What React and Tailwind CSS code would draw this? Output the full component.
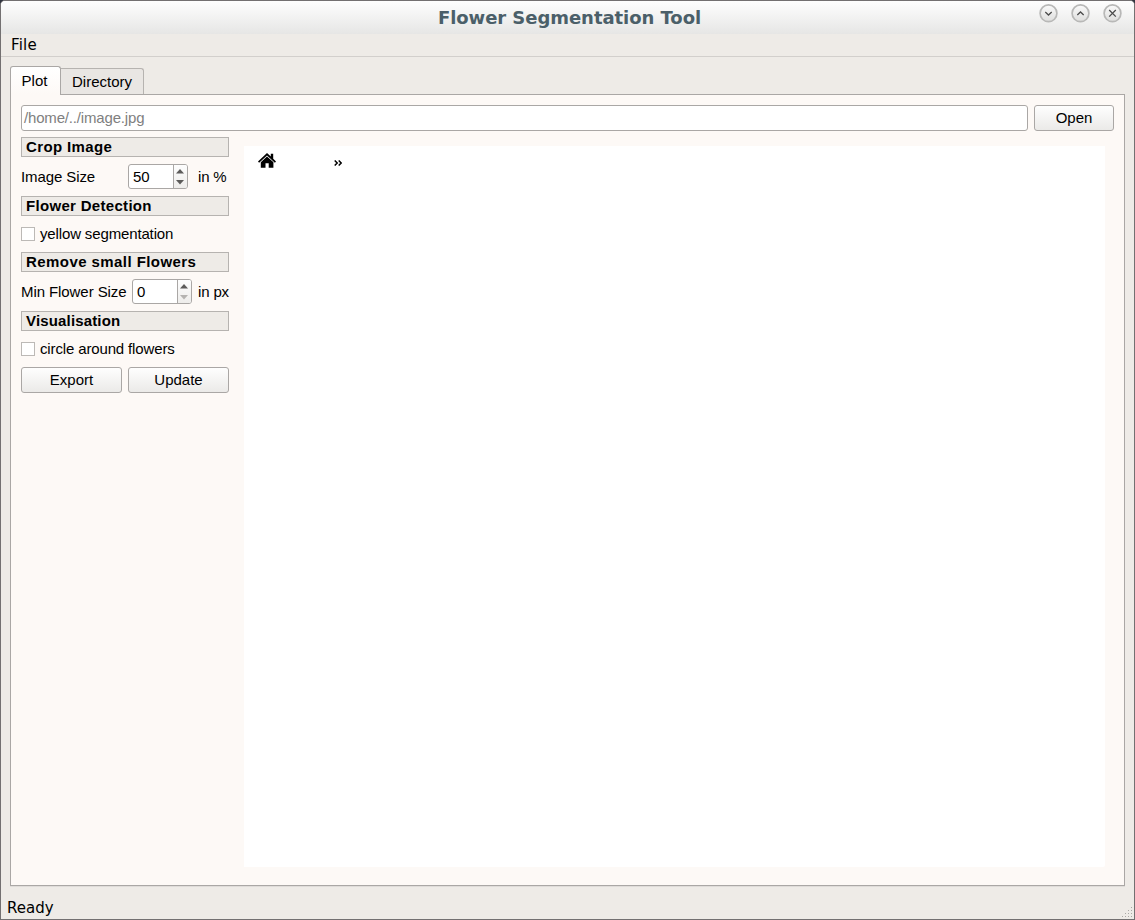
import React from "react";

const SANS = "font-['Liberation_Sans',sans-serif]";

function TitleButton({ path }) {
  return (
    <svg className="h-5 w-5" viewBox="0 0 20 20" fill="none">
      <defs>
        <linearGradient id="knob" x1="0" y1="0" x2="0" y2="1">
          <stop offset="0" stopColor="#fafafa" />
          <stop offset="1" stopColor="#dededd" />
        </linearGradient>
      </defs>
      <circle cx="10.5" cy="10.3" r="8.4" fill="url(#knob)" stroke="#b8b8b7" strokeWidth="1.7" />
      <path d={path} stroke="#4c4c4c" strokeWidth="1.3" />
    </svg>
  );
}

function SectionTitle({ children, spacing = "tracking-[0.38px]" }) {
  return (
    <div className={`${spacing} h-5 w-[208px] shrink-0 border border-[#b6b3b0] bg-[#eeebe7] pl-1 text-[15px] leading-[18px] font-bold whitespace-nowrap`}>
      {children}
    </div>
  );
}

function SpinBox({ value, atMinimum }) {
  return (
    <div className="flex h-[25px] w-[60px] shrink-0 overflow-hidden rounded-[3px] border border-[#aaa7a5] bg-white">
      <span className="w-[44px] pl-1 leading-[24px]">{value}</span>
      <div className="flex w-[14px] items-center justify-center border-l border-[#aaa7a5] bg-linear-to-b from-[#fdfdfd] to-[#eeedeb]">
        <svg className="h-[23px] w-[13px]" viewBox="0 0 13 23">
          <path d="M2 8.5 L6 4 L10 8.5 Z" fill="#5c5b5a" />
          <path d="M2 15 L10 15 L6 19.5 Z" fill={atMinimum ? "#b5b3b1" : "#5c5b5a"} />
        </svg>
      </div>
    </div>
  );
}

function CheckRow({ label }) {
  return (
    <label className="flex h-[18px] items-center gap-[5px] whitespace-nowrap">
      <span className="h-[14px] w-[14px] border border-[#bcb9b6] bg-white" />
      <span className="leading-[18px] tracking-[-0.14px]">{label}</span>
    </label>
  );
}

function PushButton({ label, width }) {
  return (
    <button
      className={`${width} h-[26px] shrink-0 rounded-[3px] border border-[#aaa7a5] bg-linear-to-b from-[#fefefe] to-[#ebeae8] text-center leading-[24px]`}
    >
      {label}
    </button>
  );
}

function ResizeGrip() {
  const dots = [[10, 1], [7, 4], [10, 4], [4, 7], [7, 7], [10, 7], [1, 10], [4, 10], [7, 10], [10, 10]];
  return (
    <svg className="h-3 w-3" viewBox="0 0 12 12" shapeRendering="crispEdges">
      {dots.map(([x, y]) => (
        <rect key={`${x}-${y}`} x={x} y={y} width="1" height="1" fill="#aaa8a5" />
      ))}
    </svg>
  );
}

export default function App() {
  return (
    <div className="h-[920px] w-[1135px] bg-[#30343f]">
      <div className={`${SANS} flex h-full w-full flex-col overflow-hidden rounded-t-[5px] border border-[#737071] bg-[#eeebe7] text-[15px] text-black`}>
        <header className="grid h-[33px] shrink-0 grid-cols-[1fr_auto_1fr] bg-linear-to-b from-[#fefefe] to-[#e6e6e5]">
          <span />
          <h1 className="pl-[4px] font-['DejaVu_Sans',sans-serif] text-[18px] leading-[33px] font-bold tracking-[-0.05px] whitespace-nowrap text-[#4b5f69]">
            Flower Segmentation Tool
          </h1>
          <div className="flex justify-end gap-3 pt-[2px] pr-3">
            <TitleButton path="M7.3 9 L10.5 12 L13.7 9" />
            <TitleButton path="M7.3 12 L10.5 9 L13.7 12" />
            <TitleButton path="M7.2 7 L13.8 13.6 M13.8 7 L7.2 13.6" />
          </div>
        </header>

        <nav className="h-[23px] shrink-0 border-b border-[#d2cfcc] pl-[10px] font-['DejaVu_Sans',sans-serif] text-[15px] leading-[22px] tracking-[0.2px]">
          File
        </nav>

        <main className="flex min-h-0 flex-1 flex-col px-[9px] pt-[9px]">
          <div className="z-10 flex h-[29px] shrink-0 items-end">
            <div className="h-[29px] w-[51px] rounded-t-[3px] border border-b-0 border-[#aaa7a5] bg-linear-to-b from-white to-[#fdf9f6] pr-[2px] text-center leading-[28px]">
              Plot
            </div>
            <div className="mb-px h-[26px] w-[83px] rounded-tr-[3px] border border-b-0 border-l-0 border-[#b6b3b0] bg-[#e9e6e3] text-center leading-[26px]">
              Directory
            </div>
          </div>

          <section className="-mt-px flex h-[792px] shrink-0 flex-col border border-[#aaa7a5] bg-[#fdf9f6] px-[10px] pt-[10px] shadow-[0_1px_0_#dfdcd9]">
            <div className="flex gap-[6px]">
              <div className="h-[26px] w-[1007px] rounded-[3px] border border-[#aaa7a5] bg-white pl-[2px] leading-[24px] tracking-[-0.17px] text-[#808080]">
                /home/../image.jpg
              </div>
              <PushButton label="Open" width="w-[80px]" />
            </div>

            <div className="flex gap-[15px]">
              <aside className="flex w-[208px] flex-col pt-[6px]">
                <SectionTitle>Crop Image</SectionTitle>
                <div className="mt-[7px] flex h-[25px] items-center whitespace-nowrap">
                  <span className="w-[107px] shrink-0 pt-px tracking-[-0.1px]">Image Size</span>
                  <SpinBox value="50" />
                  <span className="ml-[10px] pt-px tracking-[-0.2px]">in %</span>
                </div>
                <div className="mt-[7px]"><SectionTitle spacing="tracking-[0.31px]">Flower Detection</SectionTitle></div>
                <div className="mt-[9px]"><CheckRow label="yellow segmentation" /></div>
                <div className="mt-[9px]"><SectionTitle spacing="tracking-[0.43px]">Remove small Flowers</SectionTitle></div>
                <div className="mt-[7px] flex h-[25px] items-center whitespace-nowrap">
                  <span className="w-[111px] shrink-0 pt-px tracking-[-0.08px]">Min Flower Size</span>
                  <SpinBox value="0" atMinimum />
                  <span className="ml-[6px] pt-px tracking-[-0.15px]">in px</span>
                </div>
                <div className="mt-[7px]"><SectionTitle spacing="tracking-[0.16px]">Visualisation</SectionTitle></div>
                <div className="mt-[9px]"><CheckRow label="circle around flowers" /></div>
                <div className="mt-[9px] flex gap-[6px]">
                  <PushButton label="Export" width="w-[101px]" />
                  <PushButton label="Update" width="w-[101px]" />
                </div>
              </aside>

              <div className="mt-[15px] h-[721px] w-[861px] rounded-br-[2px] bg-white">
                <div className="flex items-start pt-[6px] pl-[14px]">
                  <svg className="h-[18px] w-[18px]" viewBox="0 0 18 18">
                    <path d="M9 1 L12.8 4.6 V1.8 H15.2 V6.8 L18 9.4 L16.9 10.7 L9 3.6 L1.1 10.7 L0 9.4 Z" fill="#000" />
                    <path d="M9 4.6 L15.4 10.3 V15.7 H10.7 V11.2 H7.5 V15.7 H2.8 V10.3 Z" fill="#000" />
                  </svg>
                  <svg className="mt-[8px] ml-[58px] h-[6px] w-[8px]" viewBox="0 0 8 6" fill="none">
                    <path d="M0.7 0.5 L3.2 3 L0.7 5.5 M4.7 0.5 L7.2 3 L4.7 5.5" stroke="#000" strokeWidth="1.5" />
                  </svg>
                </div>
              </div>
            </div>
          </section>

          <footer className="-mx-[9px] flex flex-1 items-end justify-between pr-px pb-px pl-[6px] font-['DejaVu_Sans',sans-serif] text-[15px]">
            <span className="leading-[19px]">Ready</span>
            <ResizeGrip />
          </footer>
        </main>
      </div>
    </div>
  );
}
